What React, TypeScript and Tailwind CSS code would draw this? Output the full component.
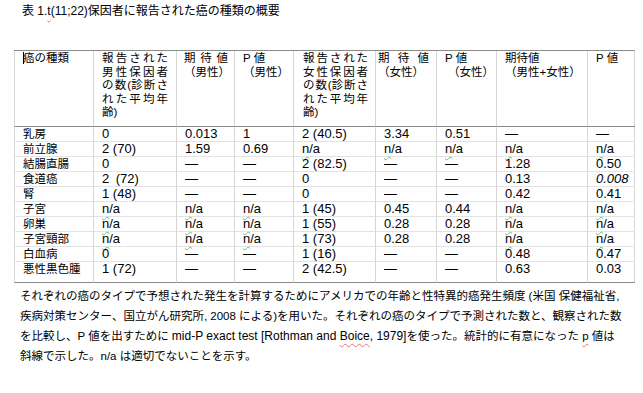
import React from "react";

const FONT = "font-['Liberation_Sans','Noto_Sans_CJK_JP',sans-serif]";

// squiggly spell-check underline
function Sq({ children, green = false }: { children: React.ReactNode; green?: boolean }) {
  return (
    <span
      className={`underline decoration-wavy decoration-1 underline-offset-[3px] ${
        green ? "decoration-[#6cc46c]" : "decoration-[#e57373]"
      }`}
    >
      {children}
    </span>
  );
}

// one header line spread over a fixed width
function Spread({ parts, w }: { parts: string[]; w: string }) {
  return (
    <div className={`flex justify-between ${w}`}>
      {parts.map((p, i) => (
        <span key={i}>{p}</span>
      ))}
    </div>
  );
}

function NA() {
  return (
    <span>
      <Sq green>n</Sq>/a
    </span>
  );
}

type Cell = string | "NA" | { italic: string };

const rows: { name: string; cells: Cell[] }[] = [
  { name: "乳房", cells: ["0", "0.013", "1", "2 (40.5)", "3.34", "0.51", "—", "—"] },
  { name: "前立腺", cells: ["2 (70)", "1.59", "0.69", "NA", "NA", "NA", "NA", "NA"] },
  { name: "結腸直腸", cells: ["0", "—", "—", "2 (82.5)", "—", "—", "1.28", "0.50"] },
  { name: "食道癌", cells: ["2\u2002(72)", "—", "—", "0", "—", "—", "0.13", { italic: "0.008" }] },
  { name: "腎", cells: ["1 (48)", "—", "—", "0", "—", "—", "0.42", "0.41"] },
  { name: "子宮", cells: ["NA", "NA", "NA", "1 (45)", "0.45", "0.44", "NA", "NA"] },
  { name: "卵巣", cells: ["NA", "NA", "NA", "1 (55)", "0.28", "0.28", "NA", "NA"] },
  { name: "子宮頸部", cells: ["NA", "NA", "NA", "1 (73)", "0.28", "0.28", "NA", "NA"] },
  { name: "白血病", cells: ["0", "—", "—", "1 (16)", "—", "—", "0.48", "0.47"] },
  { name: "悪性黒色腫", cells: ["1 (72)", "—", "—", "2 (42.5)", "—", "—", "0.63", "0.03"] },
];

function renderCell(c: Cell) {
  if (c === "NA") return <NA />;
  if (typeof c === "object") return <span className="italic">{c.italic}</span>;
  return c;
}

export default function App() {
  const head = "h-[76px] border-l border-b border-l-[#d6d6d6] border-b-[#8a8a8a] pt-px leading-[13.5px] text-[11.5px]";

  return (
    <div className={`${FONT} w-[643px] h-[393px] bg-white text-black overflow-hidden`}>
      {/* title */}
      <div className="pt-[3px] pl-[22px] text-[12px] leading-[16px]">
        表 1.<Sq>t</Sq>(11;22)保因者に報告された癌の種類の概要
      </div>

      {/* table */}
      <div className="mt-[31px] ml-[14px] w-[621px] grid grid-cols-[79px_83px_58px_59px_82px_61px_60px_91px_48px] border-t border-[#8a8a8a] border-r border-r-[#d6d6d6]">
        <div className={`${head} pl-2`}>
          <span className="inline-block w-px h-[12px] bg-black align-[-2px] -mr-px" />
          癌の種類
        </div>
        <div className={`${head} pl-2`}>
          <Spread w="w-[66px]" parts={["報", "告", "さ", "れ", "た"]} />
          <Spread w="w-[66px]" parts={["男", "性", "保", "因", "者"]} />
          <Spread w="w-[66px]" parts={["の", "数", "(診", "断", "さ"]} />
          <Spread w="w-[66px]" parts={["れ", "た", "平", "均", "年"]} />
          <div>齢)</div>
        </div>
        <div className={`${head} pl-[7px]`}>
          <Spread w="w-[44px]" parts={["期", "待", "値"]} />
          <div>（男性）</div>
        </div>
        <div className={`${head} pl-2`}>
          <div>P 値</div>
          <div>（男性）</div>
        </div>
        <div className={`${head} pl-[9px]`}>
          <Spread w="w-[65px]" parts={["報", "告", "さ", "れ", "た"]} />
          <Spread w="w-[65px]" parts={["女", "性", "保", "因", "者"]} />
          <Spread w="w-[65px]" parts={["の", "数", "(診", "断", "さ"]} />
          <Spread w="w-[65px]" parts={["れ", "た", "平", "均", "年"]} />
          <div>齢)</div>
        </div>
        <div className={`${head} pl-[2px]`}>
          <Spread w="w-[51px]" parts={["期", "待", "値"]} />
          <div>（女性）</div>
        </div>
        <div className={`${head} pl-2`}>
          <div>P 値</div>
          <div className="pl-[3px]">（女性）</div>
        </div>
        <div className={`${head} pl-2`}>
          <div>期待値</div>
          <div>（男性+女性）</div>
        </div>
        <div className={`${head} pl-2`}>
          <div>P 値</div>
        </div>

        {rows.map((r, ri) => {
          const last = ri === rows.length - 1;
          const cell = `border-l border-b border-l-[#d6d6d6] pl-2 whitespace-nowrap ${
            last ? "h-[21px] border-b-[#8a8a8a]" : "h-[15px] border-b-[#e3e3e3]"
          }`;
          return (
            <React.Fragment key={r.name}>
              <div className={`${cell} text-[11.5px] leading-[14px]`}>{r.name}</div>
              {r.cells.map((c, ci) => (
                <div key={ci} className={`${cell} text-[13px] leading-[14px]`}>
                  {renderCell(c)}
                </div>
              ))}
            </React.Fragment>
          );
        })}
      </div>

      {/* note */}
      <div className="mt-[3px] pl-[20px] text-[11.5px] leading-[20px] whitespace-nowrap">
        <div>
          それぞれの癌のタイプで予想された発生を計算するためにアメリカでの年齢と性特異的癌発生頻度 (米国 保健福祉省,
        </div>
        <div>
          疾病対策センター、国立がん研究所, 2008 による)を用いた。それぞれの癌のタイプで予測された数と、観察された数
        </div>
        <div>
          を比較し、P 値を出すために <span className="text-[12px]">mid-P exact test [Rothman and </span>
          <Sq>
            <span className="text-[12px]">Boice</span>
          </Sq>
          <span className="text-[12px]">, 1979]</span>を使った。統計的に有意になった <Sq>p</Sq> 値は
        </div>
        <div>斜線で示した。n/a は適切でないことを示す。</div>
      </div>
    </div>
  );
}
